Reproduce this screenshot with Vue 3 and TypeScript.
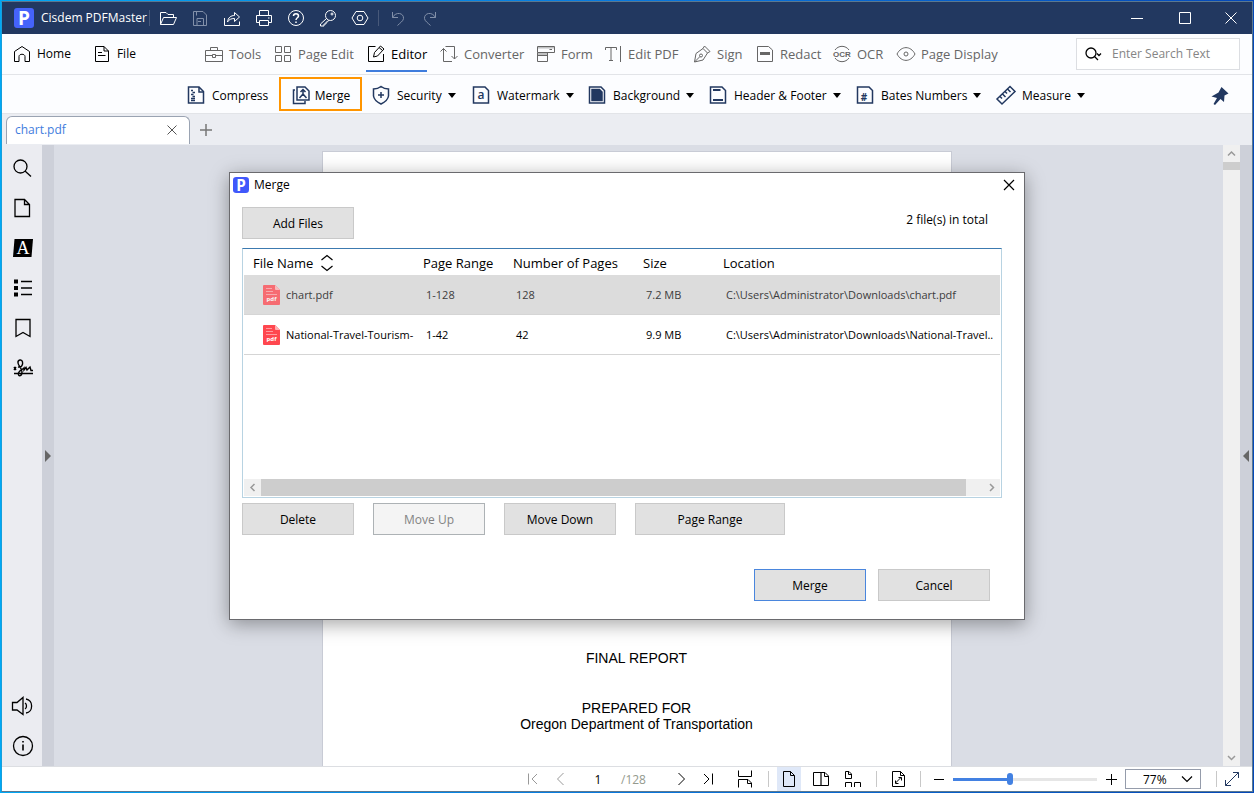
<script setup lang="ts">
import { ref } from 'vue'

interface Tool {
  label: string
  icon: string
  caret?: boolean
  active?: boolean
}

interface FileRow {
  name: string
  range: string
  pages: string
  size: string
  location: string
  selected?: boolean
}

const icons: Record<string, string> = {
  // title bar
  open: '<path d="M2.5 16.5V4.5H8L10 6.5H15.5V9.5"/><path d="M2.5 16.5L5.5 9.5H18.5L15.5 16.5Z"/>',
  save: '<path d="M3.5 3.5H13L16.5 7V17.5H3.5Z"/><path d="M7 17V10.5H13.5V17M6.5 4V7.5M8 13.5H11"/>',
  share: '<path d="M2.5 10V17.5H17.5V13.5"/><path d="M5.5 14C6 9.5 9 7.5 12.5 7.5V4.5L17.5 9L12.5 13.5V10.5C9 10.5 7 11.5 5.5 14Z"/>',
  print: '<path d="M5.5 7V2.5H14.5V7M5.5 14.5H2.5V7.5H17.5V14.5H14.5"/><path d="M5.5 12.5H14.5V17.5H5.5ZM14 10H15.5"/>',
  help: '<circle cx="10" cy="10" r="7.5"/><path d="M7.5 8C7.5 5 12.5 5 12.5 8C12.5 9.7 10 9.8 10 12M10 13.5V15" stroke-width="1.5"/>',
  key: '<circle cx="12.5" cy="7.5" r="5"/><circle cx="14" cy="6" r="1"/><path d="M8.5 10.5L2.5 16V18H6V16H8V14H9.5L10.5 12.2"/>',
  hex: '<path d="M6 3.5H14L18 10L14 16.5H6L2 10Z"/><circle cx="10" cy="10" r="2.8"/>',
  undo: '<path d="M4.5 4V9.5H10M4.5 9.5C8 3 16 5 15.5 10.5C15.3 13 12 15 9.5 17.5"/>',
  redo: '<path d="M15.5 4V9.5H10M15.5 9.5C12 3 4 5 4.5 10.5C4.7 13 8 15 10.5 17.5"/>',
  minimize: '<path d="M4 10.5H16"/>',
  maximize: '<path d="M4.500 4.500H15.500V15.500H4.500Z"/>',
  close: '<path d="M4.5 4.5L15.5 15.5M15.5 4.5L4.5 15.5"/>',
  // main menu
  home: '<path d="M7 17.5H2.5V7.5L10 2.5L17.5 7.5V17.5H13V12.5C13 9.5 7 9.5 7 12.5V17.5"/>',
  file: '<path d="M3.5 2.5H12L16.5 7V17.5H3.5ZM12 2.5V7H16.5M6 8.5H10M6 11.5H13.5"/>',
  tools: '<path d="M1.5 6.5H18.5V17.5H1.5ZM6.5 6V3.5H13.5V6M1.5 11.5H8M12 11.5H18.5M8.5 10.5H11.5V13.5H8.5Z"/>',
  pageEdit: '<path d="M2.5 2.5H8.5V8.5H2.5ZM11.5 2.5H17.5V8.5H11.5ZM2.5 11.5H8.5V17.5H2.5ZM11.5 11.5H17.5V17.5H11.5Z"/>',
  editor: '<path d="M9.5 2.5H2.5V17.5H17.5V10"/><path d="M7.5 13L8.5 8.5L14.5 2L18 5L11.5 12ZM13 3.5L16.5 6.5"/>',
  converter: '<path d="M4.5 4.5V17.5H13M1.5 7.5L4.5 4.5L7.5 7.5M6.5 2.5H15.5V15M12.5 12L15.5 15L18.5 12"/>',
  form: '<path d="M1.5 2.5H18.5V8.5H1.5ZM1.5 8.5V17.5H11.5V8.5M1.5 11.5H11.5M13.5 5.5H16"/><path d="M2 3.5H18M2 10H11" opacity=".4" stroke-width="2"/>',
  editText: '<path d="M2.5 6V3.5H13.5V6M8 3.5V16.5M6 16.5H10M17.5 2V18"/>',
  sign: '<path d="M2.5 18L4 9.5L11 4.5L15.5 9L11 16L2.5 18L8 12.5M11 4.5L12.5 2L18 7.5L15.5 9"/><circle cx="9" cy="11.5" r="1.5"/>',
  redact: '<path d="M2.5 2.5H13.5L17.5 6V17.5H2.5Z"/><path d="M5 9.5H15" stroke-width="3"/>',
  ocr: '<path d="M3 6A8.5 8.5 0 0 1 17 6M3 14A8.5 8.5 0 0 0 17 14"/><text x="10" y="13" text-anchor="middle" font-size="8" font-weight="700" font-family="Liberation Sans" fill="currentColor" stroke="none">OCR</text>',
  eye: '<path d="M1 10C5.5 1.5 14.5 1.5 19 10C14.5 18.5 5.5 18.5 1 10Z"/><circle cx="10" cy="10" r="2"/>',
  search: '<circle cx="8.5" cy="8.5" r="6.5"/><path d="M13 13L19 18.5"/>',
  // ribbon
  compress: '<path d="M2.5 2H13L17.5 6.5V18H2.5Z"/><path d="M13 2V7H17"/><path d="M5 5.5H7M6.500 7.5H9M5 9.500H7.500M6.500 11.500H9M5 13.500H9M5 15.500H9"/>',
  merge: '<path d="M6 2H14L18 6V15H6Z"/><path d="M4 5H2.5V18.5H14V16"/><path d="M12 5V9L8.5 13M12 9L15.5 13M9.5 7L12 4.5L14.5 7"/>',
  security: '<path d="M10 1.5C12.5 3.5 15 4 17.5 4V11C17 15 13 17.5 10 19C7 17.5 3 15 2.5 11V4C5 4 7.5 3.5 10 1.5ZM10 7V13M7 10H13"/>',
  watermark: '<path d="M2.5 2H14L17.5 5.5V18H2.5Z"/><text x="10" y="14" text-anchor="middle" font-size="12" font-weight="600" font-family="Open Sans" fill="currentColor" stroke="none">a</text>',
  background: '<path d="M2.5 2H14L17.5 5.5V18H2.5Z"/><path d="M5 4.5H12.5L15 7V15.5H5Z" fill="currentColor"/>',
  header: '<path d="M2.5 2H14L17.5 5.5V18H2.5Z"/><path d="M5 5H12.5M5 15H15" stroke-width="2"/>',
  bates: '<path d="M2.5 2H14L17.5 5.5V18H2.5Z"/><text x="9" y="16" text-anchor="middle" font-size="10" font-weight="700" font-family="Open Sans" fill="currentColor" stroke="none">#</text>',
  measure: '<path d="M1 14L14 1.5L19 6.5L6 19ZM4 11.5L6 13.5M6.5 9L9.500 12M9 6.5L11 8.5M11.5 4L14.5 7"/>',
  pin: '<path d="M11.5 1L18.5 7.5L14.5 9.5L14 16L10.5 13L5 19L3.5 18L7 12L1.5 10.500L8.5 6.5Z" fill="currentColor" stroke="none"/>',
  newTab: '<path d="M10 4V16M4 10H16" stroke-width="1.5"/>',
  plus: '<path d="M10.5 5V16M5 10.5H16"/>',
  minus: '<path d="M5 10.5H15"/>',
  // side bar
  page: '<path d="M3 1.5H12.5L17.5 6.5V18.5H3ZM12.5 1.5V6.5H17.5"/>',
  highlight: '<path d="M2.500 1H21L19.5 19H1Z" fill="currentColor" stroke="none"/><text x="11" y="16" text-anchor="middle" font-size="18" font-family="Liberation Serif" fill="#fff" stroke="none">A</text>',
  list: '<path d="M2 3.5H6M2 10H6M2 16.5H6" stroke-width="4"/><path d="M9 3.5H20M9 10H20M9 16.5H20"/>',
  bookmark: '<path d="M4 1.5H18V18.5L11 14.5L4 18.5Z"/>',
  signature: '<path d="M2 15.5H21" stroke-width="1.5"/><path d="M2 9L4 12M4 9L2 12M6 9C10 10 11 6 10.5 4C10 1 5.5 1.5 6 5C6.5 8 10 10 10 14C10 19 5.500 18.5 6.5 15C7.5 12 10 12 12 10V12L14 9.5L15 12L18 9L19 12.5H21" stroke-width="1.4"/>',
  sound: '<path d="M.5 6.5H5L11 1.5V18.5L5 14H.5Z"/><path d="M13 7C15 8 15 12 13 13M14 3C21.5 4 21.5 16 14 17"/>',
  info: '<circle cx="11" cy="10" r="9.5"/><path d="M11 8.5V14.5M11 5V6.5" stroke-width="1.6"/>',
  // status bar
  first: '<path d="M5.5 4.5V15.5M14 5L9 10L14 15"/>',
  prev: '<path d="M12.5 4L6.5 10L12.5 16"/>',
  next: '<path d="M7.5 4L13.5 10L7.5 16"/>',
  last: '<path d="M6 5L11 10L6 15M14.5 4.5V15.5"/>',
  continuous: '<path d="M3.5 1.5V7.5H16.5V1.5M3.5 18.5V10.5H13L16.5 14V18.5M12.5 11V14.5H16.5"/>',
  single: '<path d="M4.5 2.5H11.5L15.5 6.5V17.5H4.5ZM11.5 2.5V6.5H15.5"/>',
  double: '<path d="M2.5 3.5H14L17.5 7V16.5H2.5ZM13.5 3.5V7.5H17.5"/><path d="M10 4V16" stroke-width="2" opacity=".6"/>',
  cover: '<path d="M2.5 2.5H6L8.5 5V9.5H2.5ZM5.5 2.5V5.5H8.5M2.5 18V13.5H8.5V18M11.5 18V13.5H17.5V18"/>',
  fit: '<path d="M4.5 2.5H12.5L16.5 6.5V17.5H4.5ZM12.5 2.5V6.5H16.5M7.5 14L13 8.5M7.5 11.5V14.5H10.5M10.5 8.5H13.5V11.5"/>',
  expand: '<path d="M3.5 16.5L16.5 3.5M3.5 11V16.5H9M11 3.5H16.5V9"/>',
}

const titleTools: Tool[] = [
  { label: 'Open', icon: 'open' },
  { label: 'Save', icon: 'save' },
  { label: 'Share', icon: 'share' },
  { label: 'Print', icon: 'print' },
  { label: 'Help', icon: 'help' },
  { label: 'License', icon: 'key' },
  { label: 'Settings', icon: 'hex' },
]

const menu: Tool[] = [
  { label: 'Tools', icon: 'tools' },
  { label: 'Page Edit', icon: 'pageEdit' },
  { label: 'Editor', icon: 'editor', active: true },
  { label: 'Converter', icon: 'converter' },
  { label: 'Form', icon: 'form' },
  { label: 'Edit PDF', icon: 'editText' },
  { label: 'Sign', icon: 'sign' },
  { label: 'Redact', icon: 'redact' },
  { label: 'OCR', icon: 'ocr' },
  { label: 'Page Display', icon: 'eye' },
]

const ribbon: Tool[] = [
  { label: 'Compress', icon: 'compress' },
  { label: 'Merge', icon: 'merge', active: true },
  { label: 'Security', icon: 'security', caret: true },
  { label: 'Watermark', icon: 'watermark', caret: true },
  { label: 'Background', icon: 'background', caret: true },
  { label: 'Header & Footer', icon: 'header', caret: true },
  { label: 'Bates Numbers', icon: 'bates', caret: true },
  { label: 'Measure', icon: 'measure', caret: true },
]

const sideTop: Tool[] = [
  { label: 'Search', icon: 'search' },
  { label: 'Pages', icon: 'page' },
  { label: 'Highlights', icon: 'highlight' },
  { label: 'Outline', icon: 'list' },
  { label: 'Bookmarks', icon: 'bookmark' },
  { label: 'Signatures', icon: 'signature' },
]

const sideBottom: Tool[] = [
  { label: 'Read aloud', icon: 'sound' },
  { label: 'Information', icon: 'info' },
]

const files: FileRow[] = [
  {
    name: 'chart.pdf',
    range: '1-128',
    pages: '128',
    size: '7.2 MB',
    location: 'C:\\Users\\Administrator\\Downloads\\chart.pdf',
    selected: true,
  },
  {
    name: 'National-Travel-Tourism-',
    range: '1-42',
    pages: '42',
    size: '9.9 MB',
    location: 'C:\\Users\\Administrator\\Downloads\\National-Travel..',
  },
]

const query = ref('')
const pageNumber = ref('1')
const zoomPosition = ref(39)
const zoomLevel = ref('77%')
</script>

<template>
  <div class="desktop">
    <div class="window">
      <header class="titlebar">
        <svg class="logo logo-large" viewBox="0 0 20 20" aria-hidden="true">
          <rect width="20" height="20" rx="3" fill="#4563fb" />
          <text x="10" y="17" text-anchor="middle" font-size="19" font-weight="700" font-family="Open Sans" fill="#fff">P</text>
        </svg>
        <span class="app-name">Cisdem PDFMaster</span>
        <span class="title-sep"></span>
        <div class="title-tools">
          <button v-for="t in titleTools" :key="t.icon" class="title-btn" :class="{ faded: t.icon === 'save' }" :aria-label="t.label">
            <svg class="icon" viewBox="0 0 20 20" v-html="icons[t.icon]"></svg>
          </button>
        </div>
        <span class="title-sep"></span>
        <div class="title-history">
          <button class="title-btn faded" aria-label="Undo"><svg class="icon" viewBox="0 0 20 20" v-html="icons.undo"></svg></button>
          <button class="title-btn faded" aria-label="Redo"><svg class="icon" viewBox="0 0 20 20" v-html="icons.redo"></svg></button>
        </div>
        <div class="window-controls">
          <button aria-label="Minimize"><svg class="icon" viewBox="0 0 20 20" v-html="icons.minimize"></svg></button>
          <button aria-label="Maximize"><svg class="icon" viewBox="0 0 20 20" v-html="icons.maximize"></svg></button>
          <button aria-label="Close"><svg class="icon" viewBox="0 0 20 20" v-html="icons.close"></svg></button>
        </div>
      </header>

      <nav class="menubar">
        <div class="menu-left">
          <button class="menu-item small"><svg class="icon" viewBox="0 0 20 20" v-html="icons.home"></svg>Home</button>
          <button class="menu-item small"><svg class="icon" viewBox="0 0 20 20" v-html="icons.file"></svg>File</button>
        </div>
        <div class="menu-main">
          <button v-for="m in menu" :key="m.icon" class="menu-item" :class="{ active: m.active }">
            <svg class="icon" viewBox="0 0 20 20" v-html="icons[m.icon]"></svg>{{ m.label }}
          </button>
        </div>
        <label class="search">
          <svg class="search-icon" viewBox="0 0 18 16" aria-hidden="true">
            <circle cx="6" cy="7" r="5" /><path d="M9.5 10.5L13 14M12 7.500L14 9.500L16 7.500" />
          </svg>
          <input v-model="query" type="text" placeholder="Enter Search Text" aria-label="Search text" />
        </label>
      </nav>

      <div class="ribbon">
        <div class="ribbon-tools">
          <button v-for="r in ribbon" :key="r.icon" class="ribbon-item" :class="{ highlighted: r.active }">
            <svg class="icon" viewBox="0 0 20 20" v-html="icons[r.icon]"></svg>
            <span>{{ r.label }}</span>
            <i v-if="r.caret" class="caret"></i>
          </button>
        </div>
        <button class="pin" aria-label="Pin toolbar"><svg class="icon" viewBox="0 0 20 20" v-html="icons.pin"></svg></button>
      </div>

      <div class="tabs">
        <div class="tab">
          <span>chart.pdf</span>
          <button aria-label="Close tab"><svg viewBox="0 0 12 12"><path d="M1.5 1.5L10.5 10.5M10.5 1.5L1.5 10.5" /></svg></button>
        </div>
        <button class="new-tab" aria-label="New tab"><svg class="icon" viewBox="0 0 20 20" v-html="icons.newTab"></svg></button>
      </div>

      <div class="workspace">
        <aside class="sidebar">
          <button v-for="s in sideTop" :key="s.icon" :aria-label="s.label">
            <svg class="icon" viewBox="0 0 20 20" v-html="icons[s.icon]"></svg>
          </button>
          <span class="spacer"></span>
          <button v-for="s in sideBottom" :key="s.icon" :aria-label="s.label">
            <svg class="icon" viewBox="0 0 20 20" v-html="icons[s.icon]"></svg>
          </button>
        </aside>
        <button class="gutter" aria-label="Expand left panel"><i class="arrow-right"></i></button>
        <main class="canvas">
          <article class="paper">
            <p class="report">FINAL REPORT</p>
            <p>PREPARED FOR</p>
            <p>Oregon Department of Transportation</p>
          </article>
        </main>
        <div class="vscroll">
          <svg viewBox="0 0 17 17"><path d="M5 10.5L8.5 7L12 10.5" /></svg>
          <span class="vthumb"></span>
          <span class="spacer"></span>
          <svg viewBox="0 0 17 17"><path d="M5 7L8.5 10.5L12 7" /></svg>
        </div>
        <button class="gutter" aria-label="Expand right panel"><i class="arrow-left"></i></button>
      </div>

      <footer class="status">
        <button class="faded" aria-label="First page"><svg class="icon" viewBox="0 0 20 20" v-html="icons.first"></svg></button>
        <button class="faded" aria-label="Previous page"><svg class="icon" viewBox="0 0 20 20" v-html="icons.prev"></svg></button>
        <input v-model="pageNumber" class="page-number" type="text" aria-label="Page number" />
        <span class="page-total">/128</span>
        <button aria-label="Next page"><svg class="icon" viewBox="0 0 20 20" v-html="icons.next"></svg></button>
        <button aria-label="Last page"><svg class="icon" viewBox="0 0 20 20" v-html="icons.last"></svg></button>
        <button aria-label="Continuous"><svg class="icon" viewBox="0 0 20 20" v-html="icons.continuous"></svg></button>
        <span class="status-sep"></span>
        <button class="selected" aria-label="Single page"><svg class="icon" viewBox="0 0 20 20" v-html="icons.single"></svg></button>
        <button aria-label="Two pages"><svg class="icon" viewBox="0 0 20 20" v-html="icons.double"></svg></button>
        <button aria-label="Cover page"><svg class="icon" viewBox="0 0 20 20" v-html="icons.cover"></svg></button>
        <span class="status-sep"></span>
        <button aria-label="Fit page"><svg class="icon" viewBox="0 0 20 20" v-html="icons.fit"></svg></button>
        <span class="status-sep"></span>
        <button aria-label="Zoom out"><svg class="icon" viewBox="0 0 20 20" v-html="icons.minus"></svg></button>
        <input v-model="zoomPosition" class="slider" type="range" min="0" max="100" aria-label="Zoom" />
        <button aria-label="Zoom in"><svg class="icon" viewBox="0 0 20 20" v-html="icons.plus"></svg></button>
        <div class="zoom-box">
          <select v-model="zoomLevel" aria-label="Zoom level">
            <option>50%</option>
            <option>77%</option>
            <option>100%</option>
          </select>
          <svg viewBox="0 0 12 8"><path d="M1 1.5L6 6.5L11 1.5" /></svg>
        </div>
        <span class="status-sep"></span>
        <button class="navy" aria-label="Full screen"><svg class="icon" viewBox="0 0 20 20" v-html="icons.expand"></svg></button>
      </footer>
    </div>

    <section class="dialog" role="dialog" aria-labelledby="dialog-title">
      <div class="dialog-title">
        <svg class="logo" viewBox="0 0 20 20" aria-hidden="true">
          <rect width="20" height="20" rx="4" fill="#4058fb" />
          <text x="10" y="17" text-anchor="middle" font-size="19" font-weight="700" font-family="Open Sans" fill="#fff">P</text>
        </svg>
        <span id="dialog-title">Merge</span>
        <button aria-label="Close dialog"><svg viewBox="0 0 12 12"><path d="M1 1L11 11M11 1L1 11" /></svg></button>
      </div>
      <div class="dialog-body">
        <div class="dialog-top">
          <button class="btn">Add Files</button>
          <span class="total">2 file(s) in total</span>
        </div>
        <div class="list">
          <table>
            <colgroup>
              <col class="c-name" /><col class="c-range" /><col class="c-pages" /><col class="c-size" /><col />
            </colgroup>
            <thead>
              <tr>
                <th>
                  <div class="sortable">
                    File Name
                    <svg viewBox="0 0 14 18"><path d="M1.5 6L7 1.5L12.5 6M1.5 12L7 16.5L12.5 12" /></svg>
                  </div>
                </th>
                <th>Page Range</th>
                <th>Number of Pages</th>
                <th>Size</th>
                <th>Location</th>
              </tr>
            </thead>
            <tbody>
              <tr v-for="f in files" :key="f.name" :class="{ selected: f.selected }">
                <td class="name">
                  <div>
                    <svg class="pdf" viewBox="0 0 18 20" aria-hidden="true">
                      <path d="M1 0H12L17 5V19Q17 20 16 20H1Q0 20 0 19V1Q0 0 1 0Z" fill="#ff474f" />
                      <path d="M12 0L17 5H13Q12 5 12 4Z" fill="#ffb0b3" />
                      <path d="M3 3.5H9M3 6.5H10M3 9.5H14" stroke="#ff9a9e" fill="none" />
                      <text x="8.5" y="16" text-anchor="middle" font-size="6" font-weight="700" font-family="Open Sans" fill="#fff">pdf</text>
                    </svg>
                    <span>{{ f.name }}</span>
                  </div>
                </td>
                <td>{{ f.range }}</td>
                <td>{{ f.pages }}</td>
                <td>{{ f.size }}</td>
                <td>{{ f.location }}</td>
              </tr>
            </tbody>
          </table>
          <div class="hscroll">
            <svg viewBox="0 0 17 17"><path d="M10.5 5L7 8.5L10.5 12" /></svg>
            <span class="hthumb"></span>
            <svg viewBox="0 0 17 17"><path d="M7 5L10.5 8.5L7 12" /></svg>
          </div>
        </div>
        <div class="row-actions">
          <button class="btn">Delete</button>
          <button class="btn" disabled>Move Up</button>
          <button class="btn">Move Down</button>
          <button class="btn wide">Page Range</button>
        </div>
        <div class="dialog-actions">
          <button class="btn primary">Merge</button>
          <button class="btn">Cancel</button>
        </div>
      </div>
    </section>
  </div>
</template>

<style>
body {
  margin: 0;
}
</style>

<style scoped>
.desktop {
  position: relative;
  box-sizing: border-box;
  display: flex;
  height: 100vh;
  min-height: 700px;
  padding: 1px;
  background: linear-gradient(90deg, #00a8f6, #0878de 50%, #0448b8);
  font-family: "Open Sans", "Noto Sans", sans-serif;
  font-size: 12px;
  line-height: 16px;
  color: #000;
}
.window {
  flex: 1;
  min-width: 0;
  display: flex;
  flex-direction: column;
  border: 1px solid #5b7890;
  border-left-color: #16a0dc;
  background: #fcfdff;
}
button,
input,
select {
  margin: 0;
  padding: 0;
  border: 0;
  background: none;
  font: inherit;
  color: inherit;
}
button {
  display: flex;
  align-items: center;
  justify-content: center;
  white-space: nowrap;
}
svg {
  flex: none;
  fill: none;
  stroke: currentColor;
}
svg text {
  stroke: none;
}
.icon {
  width: 20px;
  height: 20px;
  overflow: visible;
}
.spacer {
  flex: 1;
}
.logo {
  width: 16px;
  height: 16px;
  stroke: none;
}
.logo-large {
  width: 20px;
  height: 20px;
}

.titlebar {
  display: flex;
  align-items: center;
  height: 32px;
  padding-left: 12px;
  background: #223860;
  color: #fff;
}
.app-name {
  width: 107px;
  margin: 0 1px 0 7px;
  white-space: nowrap;
}
.title-sep {
  width: 1px;
  height: 16px;
  background: #48597a;
}
.title-tools,
.title-history {
  display: flex;
}
.title-tools {
  padding: 0 2px;
}
.title-history {
  padding-left: 3px;
}
.title-btn {
  width: 32px;
  height: 32px;
}
.title-btn.faded {
  color: #8290a9;
}
.window-controls {
  display: flex;
  margin-left: auto;
}
.window-controls button {
  width: 48px;
  height: 32px;
}
.window-controls button:last-child {
  width: 43px;
}

.menubar {
  display: flex;
  align-items: center;
  height: 40px;
  padding: 0 12px 0 10px;
  border-bottom: 1px solid #e2e4e8;
}
.menu-left {
  display: flex;
  width: 192px;
  gap: 21px;
}
.menu-item {
  box-sizing: border-box;
  gap: 5px;
  height: 36px;
  padding-top: 2px;
  border-bottom: 2px solid transparent;
  font-size: 13px;
  color: #666;
}
.menu-item.small {
  font-size: 12px;
  color: #000;
}
.menu-main {
  display: grid;
  grid-template-columns: 69px 93px 73px 97px 67px 89px 63px 77px 64px auto;
  justify-items: start;
}
.menu-item.active {
  border-bottom-color: #3f7ddd;
  color: #000;
}
.search {
  box-sizing: border-box;
  display: flex;
  align-items: center;
  gap: 9px;
  width: 164px;
  height: 32px;
  margin-left: auto;
  padding: 0 8px;
  border: 1px solid #dcdee2;
  background: #fff;
}
.search-icon {
  width: 18px;
  height: 16px;
  stroke-width: 1.3;
}
.search input {
  flex: 1;
  min-width: 0;
  outline: 0;
}
.search input::placeholder {
  color: #858585;
}

.ribbon {
  display: flex;
  align-items: center;
  justify-content: space-between;
  height: 38px;
  padding: 0 22px 0 184px;
  border-bottom: 1px solid #e2e4e8;
}
.ribbon-tools {
  display: grid;
  grid-template-columns: 93px 92px 100px 116px 121px 147px 141px auto;
  justify-items: start;
}
.ribbon-item {
  gap: 6px;
  height: 34px;
  padding-top: 2px;
}
.ribbon-item .icon,
.pin {
  color: #223860;
}
.ribbon-item span {
  padding-top: 1px;
}
.pin {
  padding-top: 3px;
}
.ribbon-item .icon {
  stroke-width: 1.5;
}
.ribbon-item.highlighted {
  box-sizing: border-box;
  gap: 4px;
  width: 83px;
  border: 2px solid #ff9500;
}
.caret {
  border: 4px solid transparent;
  border-top: 5px solid #000;
  border-bottom: 0;
}

.tabs {
  display: flex;
  align-items: center;
  height: 31px;
  padding-left: 4px;
  background: #ebedf2;
}
.tab {
  box-sizing: border-box;
  display: flex;
  align-items: center;
  justify-content: space-between;
  width: 184px;
  height: 28px;
  padding: 0 8px;
  border: 1px solid #9aa3b2;
  border-bottom: 0;
  border-radius: 6px 6px 0 0;
  background: #fff;
  color: #3f7ddd;
}
.tab button {
  width: 18px;
  height: 18px;
  color: #555;
}
.tab svg {
  width: 12px;
  height: 12px;
}
.new-tab {
  width: 32px;
  color: #777;
}

.workspace {
  flex: 1;
  min-height: 0;
  display: flex;
  background: #dadde5;
}
.sidebar {
  display: flex;
  flex-direction: column;
  width: 40px;
  padding-top: 3px;
  background: #ebecf1;
}
.sidebar button {
  height: 40px;
}
.sidebar .icon {
  stroke-width: 1.3;
}
.gutter {
  width: 12px;
  background: #cdd0d9;
}
.arrow-right,
.arrow-left {
  border: 6px solid transparent;
}
.arrow-right {
  border-left-color: #666;
  border-right: 0;
}
.arrow-left {
  border-right-color: #666;
  border-left: 0;
}
.canvas {
  flex: 1;
  min-width: 0;
  display: flex;
  justify-content: center;
  padding-right: 4px;
  overflow: hidden;
}
.paper {
  box-sizing: border-box;
  width: 630px;
  margin-top: 6px;
  padding-top: 498px;
  border: 1px solid #c8cbd5;
  border-bottom: 0;
  background: #fff;
  font-family: "Liberation Sans", Arial, sans-serif;
  font-size: 14px;
  line-height: 16px;
  text-align: center;
}
.paper p {
  margin: 0;
}
.paper .report {
  margin-bottom: 34px;
}
.vscroll {
  display: flex;
  flex-direction: column;
  width: 17px;
  background: #f0f0f0;
  color: #999;
}
.vscroll svg,
.hscroll svg {
  width: 17px;
  height: 17px;
  stroke-width: 1.5;
}
.vthumb {
  height: 8px;
  background: #cdcdcd;
}

.status {
  display: grid;
  grid-template-columns: 26px 29px 46px 46px 28px 26px 47px 1px 40px 24px 39px 8px 36px 9px 28px 144px 28px 86px 10px 22px;
  justify-content: end;
  justify-items: center;
  align-items: center;
  height: 24px;
  padding-right: 9px;
  border-top: 1px solid #dcdee2;
  background: #fff;
}
.status button {
  width: 24px;
  height: 24px;
}
.status .faded {
  color: #999;
}
.status .selected {
  background: #dfe8f8;
}
.status .navy {
  color: #223860;
}
.status-sep {
  width: 1px;
  height: 16px;
  background: #c8c8c8;
}
.page-number {
  width: 32px;
  padding-top: 2px;
  text-align: center;
  outline: 0;
}
.page-total {
  justify-self: start;
  padding-top: 2px;
  color: #949a8e;
}
.slider {
  width: 144px;
  height: 16px;
  appearance: none;
}
.slider::-webkit-slider-runnable-track {
  height: 3px;
  background: linear-gradient(90deg, #4381e2 39%, #e6e6e6 39%);
}
.slider::-webkit-slider-thumb {
  width: 6px;
  height: 12px;
  margin-top: -5px;
  border-radius: 3px;
  background: #4381e2;
  appearance: none;
}
.zoom-box {
  justify-self: start;
  box-sizing: border-box;
  display: grid;
  align-items: center;
  width: 76px;
  height: 20px;
  border: 1px solid #959cab;
}
.zoom-box select,
.zoom-box svg {
  grid-area: 1 / 1;
}
.zoom-box select {
  box-sizing: border-box;
  height: 18px;
  padding: 2px 0 0 17px;
  appearance: none;
  outline: 0;
}
.zoom-box svg {
  justify-self: end;
  width: 12px;
  height: 8px;
  margin-right: 7px;
  stroke-width: 1.2;
  pointer-events: none;
}

.dialog {
  position: absolute;
  top: 172px;
  left: 50%;
  box-sizing: border-box;
  width: 796px;
  transform: translateX(-50%);
  border: 1px solid #6a6a6e;
  background: #fff;
  box-shadow: 0 4px 18px rgba(0, 0, 0, 0.36);
}
.dialog-title {
  display: flex;
  align-items: center;
  gap: 5px;
  height: 24px;
  padding: 0 6px 0 3px;
}
.dialog-title button {
  width: 18px;
  height: 18px;
  margin-left: auto;
}
.dialog-title button svg {
  width: 12px;
  height: 12px;
  stroke-width: 1.2;
}
.dialog-body {
  padding: 10px 22px 18px 12px;
}
.dialog-top {
  display: flex;
  align-items: center;
  justify-content: space-between;
}
.total {
  padding: 0 14px 6px 0;
}
.btn {
  box-sizing: border-box;
  width: 112px;
  height: 32px;
  padding-top: 2px;
  border: 1px solid #c9c9c9;
  background: #e1e1e1;
}
.btn:disabled {
  border-color: #adb2b5;
  background: #f4f4f4;
  color: #838383;
}
.btn.wide {
  width: 150px;
}
.btn.primary {
  border-color: #4a86dd;
}
.list {
  box-sizing: border-box;
  display: flex;
  flex-direction: column;
  justify-content: space-between;
  height: 250px;
  margin-top: 9px;
  padding: 0 1px 1px;
  border: 1px solid #b8d3e2;
  border-top-color: #3c7ab0;
}
table {
  width: 100%;
  table-layout: fixed;
  border-collapse: collapse;
}
.c-name {
  width: 170px;
}
.c-range {
  width: 90px;
}
.c-pages {
  width: 130px;
}
.c-size {
  width: 80px;
}
th {
  height: 24px;
  padding: 2px 0 0 9px;
  font-size: 13px;
  font-weight: 400;
  text-align: left;
  white-space: nowrap;
}
.sortable {
  display: flex;
  align-items: center;
  gap: 7px;
}
.sortable svg {
  width: 14px;
  height: 18px;
  stroke-width: 1.2;
}
td {
  height: 39px;
  padding: 0 0 0 12px;
  border-bottom: 1px solid #d5d5d5;
  font-size: 11px;
  white-space: nowrap;
}
td.name {
  padding-left: 19px;
}
.selected td {
  background: #dcdcdc;
  color: #3c3c3c;
}
.selected .pdf {
  opacity: 0.75;
}
.name div {
  display: flex;
  align-items: center;
  gap: 5px;
}
.pdf {
  width: 18px;
  height: 20px;
  stroke: none;
}
.hscroll {
  display: flex;
  height: 17px;
  background: #f0f0f0;
  color: #999;
}
.hthumb {
  flex: 1;
  margin-right: 17px;
  background: #cdcdcd;
}
.row-actions {
  display: flex;
  gap: 19px;
  margin-top: 5px;
}
.dialog-actions {
  display: flex;
  justify-content: flex-end;
  gap: 12px;
  margin-top: 34px;
  padding-right: 12px;
}
</style>
